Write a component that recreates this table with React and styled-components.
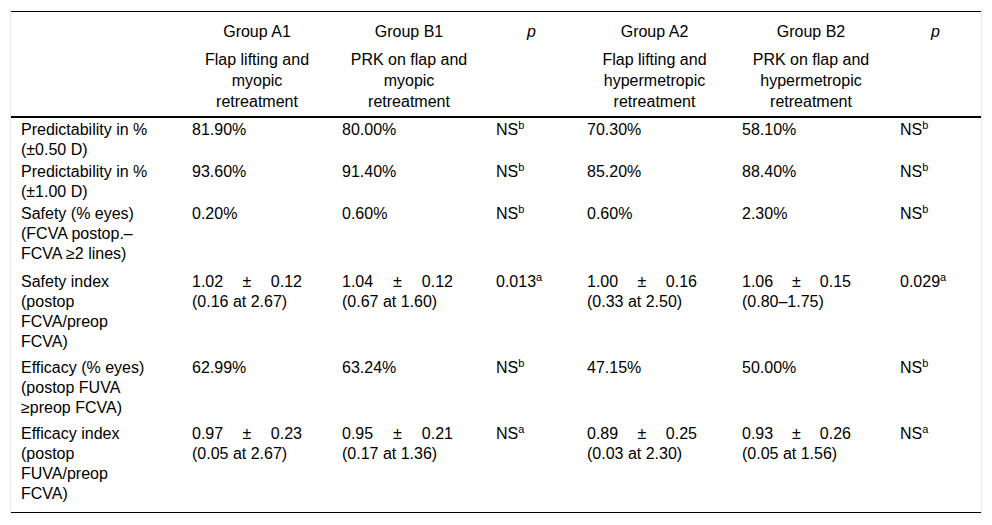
import React from "react";
import styled, { createGlobalStyle } from "styled-components";

const Global = createGlobalStyle`
  html, body { margin: 0; padding: 0; background: #fff; }
  body { font-family: "Liberation Sans", Arial, sans-serif; color: #000; }
`;

const Frame = styled.div`
  margin: 10px 10px 0;
  padding-top: 1px;
  border-left: 1px solid #e6e6e6;
  border-right: 1px solid #e6e6e6;
`;

const Table = styled.table`
  width: 970px;
  table-layout: fixed;
  border-collapse: collapse;
  font-size: 16px;
  border-top: 1px solid #000;
  border-bottom: 1px solid #000;
`;

const Col = styled.col`
  width: ${(p) => p.$w}px;
`;

const Head = styled.thead`
  border-bottom: 2px solid #000;
`;

const HeadCell = styled.th`
  font-weight: normal;
  text-align: center;
  vertical-align: top;
  line-height: 21px;
  padding: 9px 10px 4px;
`;

const Title = styled.div``;

const Sub = styled.div`
  margin-top: 7px;
`;

const Italic = styled.span`
  font-style: italic;
`;

const Cell = styled.td`
  vertical-align: top;
  line-height: 20px;
  padding: 2px ${(p) => p.$pr}px ${(p) => p.$pb}px 10px;
  text-align: ${(p) => (p.$justify ? "justify" : "left")};
`;

const Sup = styled.sup`
  font-size: 11px;
  line-height: 0;
  vertical-align: 6px;
`;

const cols = [
  { w: 171, pr: 30 },
  { w: 150, pr: 30 },
  { w: 154, pr: 33 },
  { w: 91, pr: 10 },
  { w: 155, pr: 35 },
  { w: 158, pr: 39 },
  { w: 91, pr: 10 },
];

const header = [
  null,
  { t: "Group A1", s: "Flap lifting and myopic retreatment" },
  { t: "Group B1", s: "PRK on flap and myopic retreatment" },
  { p: true },
  { t: "Group A2", s: "Flap lifting and hypermetropic retreatment" },
  { t: "Group B2", s: "PRK on flap and hypermetropic retreatment" },
  { p: true },
];

const P = (v, s) => ({ v, s });

const rows = [
  {
    pb: 0,
    cells: ["Predictability in % (±0.50 D)", "81.90%", "80.00%", P("NS", "b"), "70.30%", "58.10%", P("NS", "b")],
  },
  {
    pb: 0,
    cells: ["Predictability in % (±1.00 D)", "93.60%", "91.40%", P("NS", "b"), "85.20%", "88.40%", P("NS", "b")],
  },
  {
    pb: 6,
    cells: ["Safety (% eyes) (FCVA postop.– FCVA ≥2 lines)", "0.20%", "0.60%", P("NS", "b"), "0.60%", "2.30%", P("NS", "b")],
  },
  {
    pb: 4,
    cells: [
      "Safety index (postop FCVA/preop FCVA)",
      "1.02 ± 0.12 (0.16 at 2.67)",
      "1.04 ± 0.12 (0.67 at 1.60)",
      P("0.013", "a"),
      "1.00 ± 0.16 (0.33 at 2.50)",
      "1.06 ± 0.15 (0.80–1.75)",
      P("0.029", "a"),
    ],
  },
  {
    pb: 4,
    cells: ["Efficacy (% eyes) (postop FUVA ≥preop FCVA)", "62.99%", "63.24%", P("NS", "b"), "47.15%", "50.00%", P("NS", "b")],
  },
  {
    pb: 8,
    cells: [
      "Efficacy index (postop FUVA/preop FCVA)",
      "0.97 ± 0.23 (0.05 at 2.67)",
      "0.95 ± 0.21 (0.17 at 1.36)",
      P("NS", "a"),
      "0.89 ± 0.25 (0.03 at 2.30)",
      "0.93 ± 0.26 (0.05 at 1.56)",
      P("NS", "a"),
    ],
  },
];

export default function App() {
  return (
    <>
      <Global />
      <Frame>
        <Table>
          <colgroup>
            {cols.map((c, i) => (
              <Col key={i} $w={c.w} />
            ))}
          </colgroup>
          <Head>
            <tr>
              {header.map((h, i) => (
                <HeadCell key={i}>
                  {h && h.p && <Italic>p</Italic>}
                  {h && h.t && (
                    <>
                      <Title>{h.t}</Title>
                      <Sub>{h.s}</Sub>
                    </>
                  )}
                </HeadCell>
              ))}
            </tr>
          </Head>
          <tbody>
            {rows.map((r, ri) => (
              <tr key={ri}>
                {r.cells.map((c, ci) => (
                  <Cell
                    key={ci}
                    $pr={cols[ci].pr}
                    $pb={r.pb}
                    $justify={ci > 0 && typeof c === "string" && c.includes("±")}
                  >
                    {typeof c === "string" ? (
                      c
                    ) : (
                      <>
                        {c.v}
                        <Sup>{c.s}</Sup>
                      </>
                    )}
                  </Cell>
                ))}
              </tr>
            ))}
          </tbody>
        </Table>
      </Frame>
    </>
  );
}
